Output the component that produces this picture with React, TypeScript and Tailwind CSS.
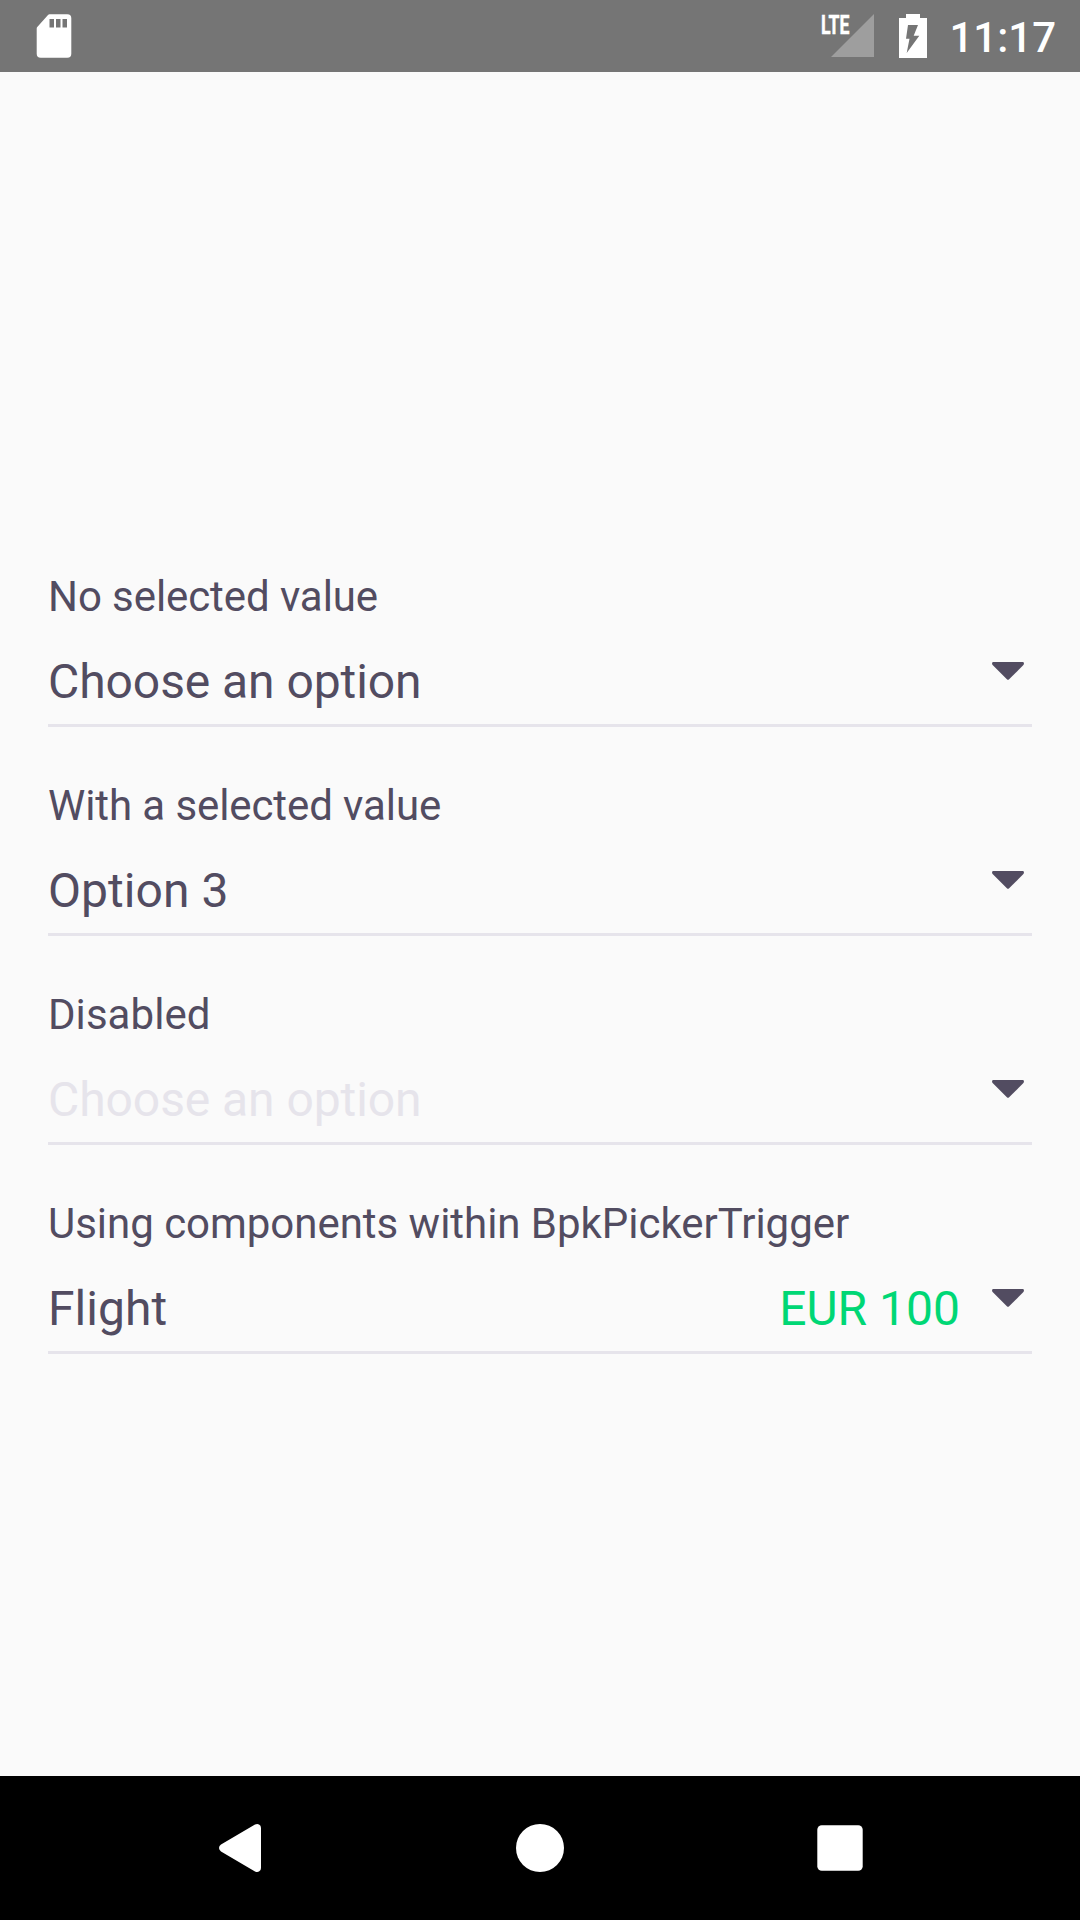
import React from "react";

const rows = [
  { label: "No selected value", labelClass: "tracking-[-0.08px]", value: "Choose an option", valueClass: "tracking-[-0.07px]", price: "" },
  { label: "With a selected value", labelClass: "tracking-[-0.09px]", value: "Option 3", valueClass: "tracking-[0.05px]", price: "" },
  { label: "Disabled", labelClass: "tracking-[0.05px]", value: "Choose an option", valueClass: "tracking-[-0.07px] text-[#e6e4eb]", price: "" },
  { label: "Using components within BpkPickerTrigger", labelClass: "tracking-[-0.03px]", value: "Flight", valueClass: "tracking-[0.05px]", price: "EUR 100" },
];

function SdCardIcon() {
  return (
    <svg width="36" height="44" viewBox="36 14 36 44">
      <path
        fillRule="evenodd"
        fill="#fff"
        d="M49.5 14.3H67.3a4 4 0 0 1 4 4V53.7a4 4 0 0 1-4 4H40.7a4 4 0 0 1-4-4V28.5a2.5 2.5 0 0 1 .8-1.8L48 15A2.5 2.5 0 0 1 49.5 14.3ZM49.5 19V27.5H54V19ZM56 19V27.5H60.5V19ZM62.5 19V27.5H67V19Z"
      />
    </svg>
  );
}

function SignalIcon() {
  return (
    <svg className="overflow-visible" width="60" height="60" viewBox="814 6 60 60">
      <path d="M831 57L874 14V57Z" fill="#fff" fillOpacity="0.3" />
      <text x="820.9" y="33.6" fontSize="26" fontWeight="700" fontFamily="Roboto, sans-serif" fill="#fff" stroke="#fff" strokeWidth="0.5" textLength="28.5" lengthAdjust="spacingAndGlyphs">
        LTE
      </text>
    </svg>
  );
}

function BatteryIcon() {
  return (
    <svg width="28" height="44" viewBox="899 14 28 44">
      <path
        fillRule="evenodd"
        fill="#fff"
        d="M906 14H920V18H927V58H899V18H906ZM908 25L906 38.7H909.5L906.7 53L919.3 35.7H913.7L918 25Z"
      />
    </svg>
  );
}

function Caret() {
  return (
    <svg className="mt-[25px] shrink-0 self-start" width="32" height="18" viewBox="0 0 32 18">
      <path d="M1.4 0H30.6C32 0 32.4 1.8 31.4 3L17.1 17.3Q16 18.3 14.9 17.3L.6 3C-.4 1.8 0 0 1.4 0Z" fill="#524c61" />
    </svg>
  );
}

export default function App() {
  return (
    <div className="flex h-[1920px] w-[1080px] flex-col bg-[#fafafa] font-[Roboto,sans-serif] text-[#524c61]">
      <header className="flex h-[72px] shrink-0 items-center bg-[#757575] pr-6 pl-9 text-white">
        <SdCardIcon />
        <div className="ml-auto flex items-center">
          <SignalIcon />
          <div className="ml-[25px] flex">
            <BatteryIcon />
          </div>
          <span className="ml-[22px] pt-[3px] text-[42px] leading-[69px] font-medium">11:17</span>
        </div>
      </header>
      <main className="grow px-12 pt-[497px]">
        {rows.map((r) => (
          <section key={r.label} className="h-[209px]">
            <div className="h-[68px] text-[42px] leading-[56px]">
              <span className={r.labelClass}>{r.label}</span>
            </div>
            <div className="flex h-[90px] items-start border-b-3 border-[#e6e4eb] pr-2 text-[48px] leading-[89px]">
              <div className="grow">
                <span className={r.valueClass}>{r.value}</span>
              </div>
              <span className="mr-8 text-[#00d775]">{r.price}</span>
              <Caret />
            </div>
          </section>
        ))}
      </main>
      <nav className="flex h-[144px] shrink-0 items-center bg-black pl-[219px]">
        <svg width="42" height="48" viewBox="0 0 42 48">
          <path d="M36 .6Q38 -.4 40 .4Q42 1.2 42 4V44Q42 46.8 40 47.6Q38 48.4 36 47.4L2 27.4Q0 26 0 24T2 20.6Z" fill="#fff" />
        </svg>
        <div className="ml-[255px] size-12 rounded-full bg-white" />
        <svg className="ml-[252px]" width="48" height="48" viewBox="0 0 48 48">
          <rect x="1.3" y="1.3" width="45.4" height="45.4" rx="4.5" fill="#fff" />
        </svg>
      </nav>
    </div>
  );
}
